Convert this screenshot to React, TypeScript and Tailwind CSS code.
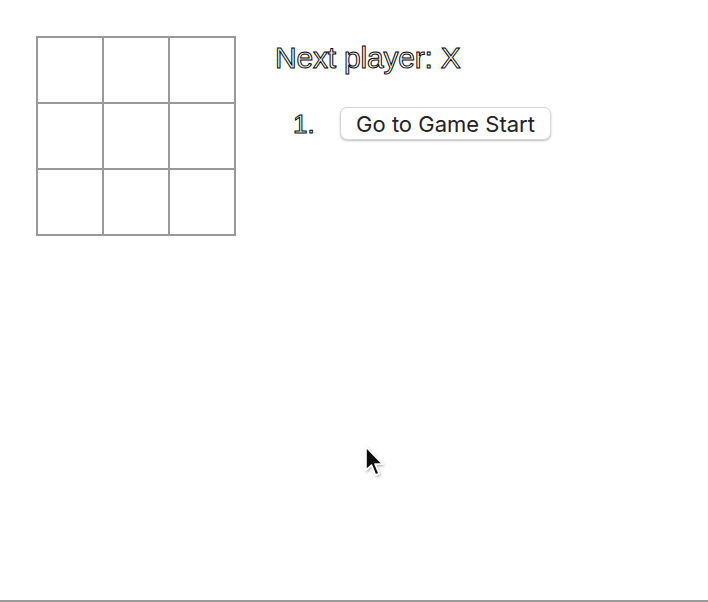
import React from "react";

function Square() {
  return <button className="w-[68px] h-[68px] border-2 border-[#999] bg-white -ml-[2px] first:ml-0 p-0" />;
}

function Row() {
  return (
    <div className="flex -mt-[2px] first:mt-0">
      <Square />
      <Square />
      <Square />
    </div>
  );
}

export default function App() {
  return (
    <div className="relative h-[602px] w-[708px] bg-white border-b-2 border-[#9a9a9a] overflow-hidden">
      <div className="flex pt-[36px] pl-[36px]">
        <div className="flex flex-col">
          <Row />
          <Row />
          <Row />
        </div>
        <div className="ml-[39px] pt-[4px]">
          <div
            className="text-[30px] leading-[36px] text-white [-webkit-text-stroke:1px_#000] tracking-[-0.2px]"
            style={{ fontFamily: '"Liberation Sans", Arial, sans-serif' }}
          >
            Next player: X
          </div>
          <ol className="mt-[31px] flex items-center">
            <li className="flex items-center">
              <span
                className="w-[65px] pl-[18px] text-[26px] leading-[30px] text-white [-webkit-text-stroke:1px_#000]"
                style={{ fontFamily: '"Liberation Sans", Arial, sans-serif' }}
              >
                1.
              </span>
              <button
                className="h-[33px] w-[211px] rounded-[7px] border border-[#d6d6d6] bg-white shadow-[0_1px_2px_rgba(0,0,0,0.25)] text-[22px] leading-[24px] text-[#222] flex items-center justify-center pt-[1px]"
                style={{ fontFamily: 'Inter, "Liberation Sans", Arial, sans-serif' }}
              >
                Go to Game Start
              </button>
            </li>
          </ol>
        </div>
      </div>
      <svg
        className="absolute left-[363px] top-[445px]"
        width="24"
        height="34"
        viewBox="0 0 24 34"
      >
        <defs>
          <filter id="sh" x="-50%" y="-50%" width="200%" height="200%">
            <feDropShadow dx="1" dy="1.5" stdDeviation="1.2" floodColor="#000" floodOpacity="0.3" />
          </filter>
        </defs>
        <path
          d="M3 2 L3 25 L8.5 20 L12.5 30 L16 28.5 L12 19 L19.5 19 Z"
          fill="#111"
          stroke="#fff"
          strokeWidth="1.6"
          strokeLinejoin="round"
          filter="url(#sh)"
        />
      </svg>
    </div>
  );
}
